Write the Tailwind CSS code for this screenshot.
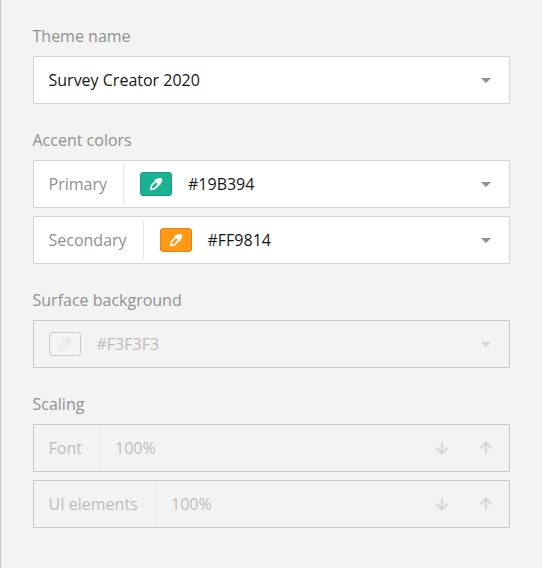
<!DOCTYPE html>
<html lang="en">
<head>
<meta charset="utf-8">
<title>Theme settings</title>
<script src="https://cdn.jsdelivr.net/npm/@tailwindcss/browser@4"></script>
</head>
<body class="bg-[#f3f3f3]">
<svg class="hidden">
  <symbol id="caret" viewBox="0 0 10 5"><path d="M0 0H10L5 5Z" fill="currentColor"/></symbol>
  <symbol id="down" viewBox="0 0 14 14"><path d="M7 1V12M1.5 7.1L7 12.6L12.5 7.1" fill="none" stroke="currentColor" stroke-width="2.1"/></symbol>
  <symbol id="up" viewBox="0 0 14 14"><path d="M7 13V2M1.5 6.9L7 1.4L12.5 6.9" fill="none" stroke="currentColor" stroke-width="2.1"/></symbol>
  <symbol id="dropper" viewBox="0 0 16 16">
    <path d="M6.7 3.9Q7.3 2.4 8.8 2.8C10 2 12 1.7 13.4 2.1C14.6 2.7 14.5 4.5 13.8 5.7C13.4 6.4 13 6.9 12.6 7.3Q13 8.8 11.7 9.4L6.6 5Z" fill="currentColor"/>
    <path d="M7.8 5.4L4.1 8.8C2.8 10.2 3.5 11.8 2.5 13.5C4.2 13 5.7 13.6 7.2 12.2L10.7 8.4" fill="none" stroke="currentColor" stroke-width="1.7" stroke-linejoin="round"/>
  </symbol>
</svg>
<main class="h-[568px] w-[542px] border-l border-[#c6c6c6] bg-[#f3f3f3] pt-6 pl-8 font-['Open_Sans',sans-serif] indent-[-0.5px] text-base leading-6 text-[#909090]">
  <div class="flex w-[477px] flex-col gap-6">
    <section class="flex flex-col gap-2">
      <h2>Theme name</h2>
      <div class="flex h-12 items-center border border-[#d4d4d4] bg-white pr-[18px] pl-[15px]">
        <span class="text-[#161616]">Survey Creator 2020</span>
        <svg class="ml-auto h-[5px] w-[10px] text-[#909090]"><use href="#caret"/></svg>
      </div>
    </section>
    <section class="flex flex-col gap-2">
      <h2>Accent colors</h2>
      <div class="flex h-12 items-center border border-[#d4d4d4] bg-white pr-[18px] pl-[15px]">
        <span class="flex h-10 w-[75px] items-center border-r border-[#e7e7e7]">Primary</span>
        <span class="ml-4 flex h-6 w-8 items-center justify-center rounded-[3px] border border-[#179c82] bg-[#19b394] text-white"><svg class="h-4 w-4"><use href="#dropper"/></svg></span>
        <span class="ml-4 indent-0 text-[#161616]">#19B394</span>
        <svg class="ml-auto h-[5px] w-[10px]"><use href="#caret"/></svg>
      </div>
      <div class="flex h-12 items-center border border-[#d4d4d4] bg-white pr-[18px] pl-[15px]">
        <span class="flex h-10 w-[95px] items-center border-r border-[#e7e7e7]">Secondary</span>
        <span class="ml-4 flex h-6 w-8 items-center justify-center rounded-[3px] border border-[#dc8617] bg-[#ff9814] text-white"><svg class="h-4 w-4"><use href="#dropper"/></svg></span>
        <span class="ml-4 text-[#161616]">#FF9814</span>
        <svg class="ml-auto h-[5px] w-[10px]"><use href="#caret"/></svg>
      </div>
    </section>
    <section class="flex flex-col gap-2">
      <h2>Surface background</h2>
      <div class="flex h-12 items-center border border-[#c8c8c8] pr-[18px] pl-[15px]">
        <span class="flex h-6 w-8 items-center justify-center rounded-[3px] border border-[#cccccc] text-[#e7e7e7]"><svg class="h-4 w-4"><use href="#dropper"/></svg></span>
        <span class="ml-4 text-[#bcbcbc]">#F3F3F3</span>
        <svg class="ml-auto h-[5px] w-[10px] text-[#d6d6d6]"><use href="#caret"/></svg>
      </div>
    </section>
    <section class="flex flex-col gap-2">
      <h2>Scaling</h2>
      <div class="flex h-12 items-center border border-[#c8c8c8] pr-4 pl-[15px] text-[#bcbcbc]">
        <span class="flex h-10 w-[50px] items-center border-r border-[#ebebeb]">Font</span>
        <span class="ml-4 indent-0">100%</span>
        <span class="ml-auto flex gap-[30px] text-[#d6d6d6]"><svg class="h-[14px] w-[14px]"><use href="#down"/></svg><svg class="h-[14px] w-[14px]"><use href="#up"/></svg></span>
      </div>
      <div class="flex h-12 items-center border border-[#c8c8c8] pr-4 pl-[15px] text-[#bcbcbc]">
        <span class="flex h-10 w-[106px] items-center border-r border-[#ebebeb]">UI elements</span>
        <span class="ml-4 indent-0">100%</span>
        <span class="ml-auto flex gap-[30px] text-[#d6d6d6]"><svg class="h-[14px] w-[14px]"><use href="#down"/></svg><svg class="h-[14px] w-[14px]"><use href="#up"/></svg></span>
      </div>
    </section>
  </div>
</main>
</body>
</html>
